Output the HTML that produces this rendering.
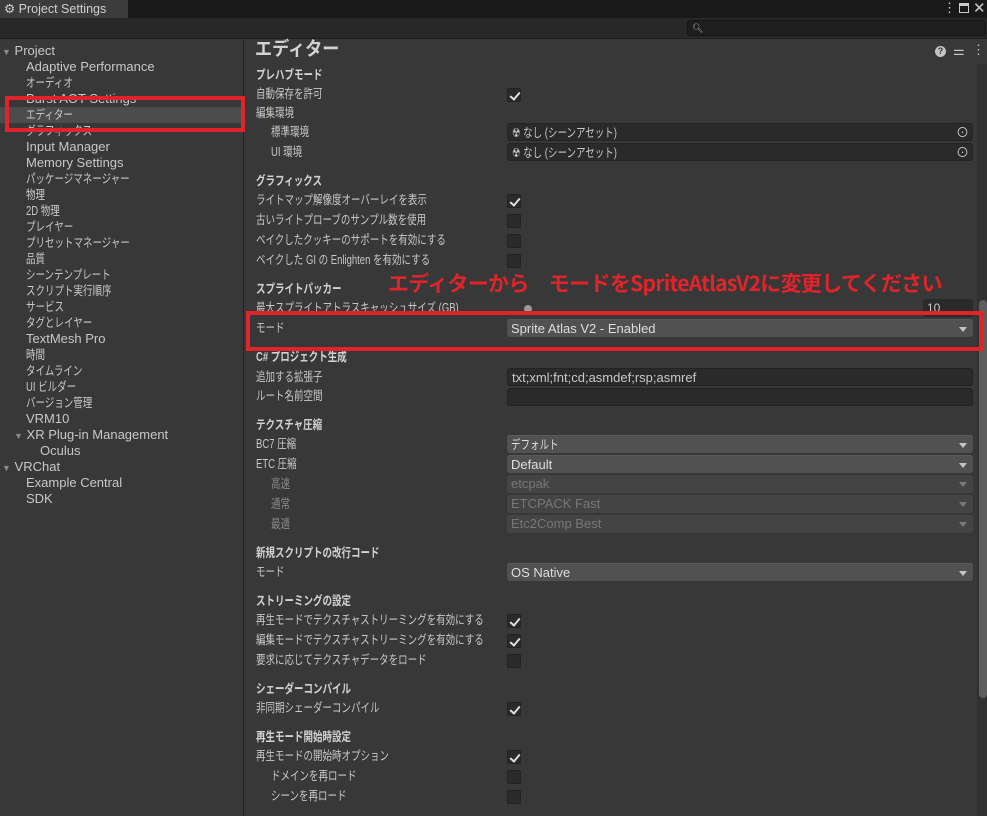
<!DOCTYPE html>
<html><head><meta charset="utf-8"><style>
*{margin:0;padding:0;box-sizing:border-box}
body{width:987px;height:816px;background:#383838;overflow:hidden;position:relative;font-family:"Liberation Sans","Noto Sans CJK JP",sans-serif;font-size:12px;color:#c8c8c8}
.a{position:absolute;white-space:nowrap}
.l{position:absolute;left:26px;line-height:16px;white-space:nowrap;font-size:12.5px;transform:scaleX(.76);transform-origin:left}
.r{position:absolute;left:256px;line-height:20px;white-space:nowrap;font-size:12.5px;transform:scaleX(.76);transform-origin:left}
.e{font-size:13px;transform:none}
.h{font-weight:bold;color:#d2d2d2}
.j{display:inline-block;font-size:12.5px;transform:scaleX(.76);transform-origin:left}
.f{position:absolute;left:507px;width:466px;height:18px;border-radius:3px;line-height:18px;padding-left:4px;white-space:nowrap;font-size:13px}
.fd{background:#2a2a2a;border:1px solid #232323}
.dd{background:#515151;border-top:1px solid #5a5a5a;color:#dedede}
.dis{background:#444;color:#777;border:none}
.dd::after,.dis::after{content:"";position:absolute;right:6px;top:7px;border:4px solid transparent;border-top:5px solid #c4c4c4;border-bottom:0}
.dis::after{border-top-color:#777}
.cb{position:absolute;left:507px;width:14px;height:14px;background:#2a2a2a;border:1px solid #222;border-radius:2px}
.ck::after{content:"";position:absolute;left:4px;top:1px;width:4px;height:8px;border-right:2px solid #e0e0e0;border-bottom:2px solid #e0e0e0;transform:rotate(40deg)}
.red{position:absolute;border:4px solid #e0242a}
</style></head><body>
<div class="a" style="left:0;top:0;width:987px;height:18px;background:#191919"></div>
<div class="a" style="left:0;top:0;width:128px;height:18px;background:#3c3c3c;line-height:18px;padding-left:4px;font-size:12.5px;color:#d0d0d0">⚙ Project Settings</div>
<div class="a" style="left:943px;top:0;color:#ccc;line-height:16px;font-size:13px">⋮</div>
<div class="a" style="left:959px;top:3px;width:10px;height:10px;border:1.5px solid #ccc;border-top-width:3px"></div>
<div class="a" style="left:973px;top:-1px;color:#ccc;font-size:15px">✕</div>
<div class="a" style="left:0;top:18px;width:987px;height:21px;background:#282828;border-bottom:1px solid #1e1e1e"></div>
<div class="a" style="left:687px;top:20px;width:299px;height:16px;background:#1e1e1e;border:1px solid #151515;border-radius:3px;font-size:9px;color:#aaa;padding-left:4px;line-height:14px">🔍︎</div>
<div class="a" style="left:0;top:40px;width:244px;height:776px;background:#383838;border-right:1px solid #222"></div>
<div class="a" style="left:0;top:107px;width:244px;height:16px;background:#4c4c4c"></div>
<div class="l e" style="left:2px;top:43px"><span style="font-size:9px;color:#888">▼</span> Project</div>
<div class="l e" style="top:59px">Adaptive Performance</div>
<div class="l" style="top:75px">オーディオ</div>
<div class="l e" style="top:91px">Burst AOT Settings</div>
<div class="l" style="top:107px">エディター</div>
<div class="l" style="top:123px">グラフィックス</div>
<div class="l e" style="top:139px">Input Manager</div>
<div class="l e" style="top:155px">Memory Settings</div>
<div class="l" style="top:171px">パッケージマネージャー</div>
<div class="l" style="top:187px">物理</div>
<div class="l" style="top:203px">2D 物理</div>
<div class="l" style="top:219px">プレイヤー</div>
<div class="l" style="top:235px">プリセットマネージャー</div>
<div class="l" style="top:251px">品質</div>
<div class="l" style="top:267px">シーンテンプレート</div>
<div class="l" style="top:283px">スクリプト実行順序</div>
<div class="l" style="top:299px">サービス</div>
<div class="l" style="top:315px">タグとレイヤー</div>
<div class="l e" style="top:331px">TextMesh Pro</div>
<div class="l" style="top:347px">時間</div>
<div class="l" style="top:363px">タイムライン</div>
<div class="l" style="top:379px">UI ビルダー</div>
<div class="l" style="top:395px">バージョン管理</div>
<div class="l e" style="top:411px">VRM10</div>
<div class="l e" style="left:14px;top:427px"><span style="font-size:9px;color:#888">▼</span> XR Plug-in Management</div>
<div class="l e" style="left:40px;top:443px">Oculus</div>
<div class="l e" style="left:2px;top:459px"><span style="font-size:9px;color:#888">▼</span> VRChat</div>
<div class="l e" style="top:475px">Example Central</div>
<div class="l e" style="top:491px">SDK</div>

<div class="a h" style="left:255px;top:38px;font-size:19px;line-height:24px;transform:scaleX(.9);transform-origin:left">エディター</div>
<div class="a" style="left:935px;top:46px;width:11px;height:11px;border-radius:50%;background:#c4c4c4;color:#383838;font-size:9px;font-weight:bold;text-align:center;line-height:11px">?</div>
<div class="a" style="left:953px;top:43px;font-size:13px;color:#c4c4c4">⚌</div>
<div class="a" style="left:972px;top:42px;font-size:13px;color:#c4c4c4">⋮</div>

<div class="r h" style="top:65px">プレハブモード</div>
<div class="r" style="top:84px">自動保存を許可</div><div class="cb ck" style="top:88px"></div>
<div class="r" style="top:103px">編集環境</div>
<div class="r" style="left:271px;top:122px">標準環境</div><div class="f fd" style="top:123px"><span class="j">☢ なし (シーンアセット)</span><span style="position:absolute;right:3px;top:0">⊙</span></div>
<div class="r" style="left:271px;top:142px">UI 環境</div><div class="f fd" style="top:143px"><span class="j">☢ なし (シーンアセット)</span><span style="position:absolute;right:3px;top:0">⊙</span></div>

<div class="r h" style="top:171px">グラフィックス</div>
<div class="r" style="top:190px">ライトマップ解像度オーバーレイを表示</div><div class="cb ck" style="top:194px"></div>
<div class="r" style="top:210px">古いライトプローブのサンプル数を使用</div><div class="cb" style="top:214px"></div>
<div class="r" style="top:230px">ベイクしたクッキーのサポートを有効にする</div><div class="cb" style="top:234px"></div>
<div class="r" style="top:250px">ベイクした GI の Enlighten を有効にする</div><div class="cb" style="top:254px"></div>

<div class="r h" style="top:279px">スプライトパッカー</div>
<div class="r" style="top:298px">最大スプライトアトラスキャッシュサイズ (GB)</div>
<div class="a" style="left:524px;top:305px;width:8px;height:8px;border-radius:50%;background:#999"></div>
<div class="a" style="left:923px;top:299px;width:50px;height:18px;background:#2a2a2a;border-radius:3px;padding-left:4px;line-height:18px">10</div>
<div class="r" style="top:318px">モード</div><div class="f dd" style="top:319px">Sprite Atlas V2 - Enabled</div>

<div class="r h" style="top:347px">C# プロジェクト生成</div>
<div class="r" style="top:367px">追加する拡張子</div><div class="f fd" style="top:368px">txt;xml;fnt;cd;asmdef;rsp;asmref</div>
<div class="r" style="top:386px">ルート名前空間</div><div class="f fd" style="top:388px"></div>

<div class="r h" style="top:415px">テクスチャ圧縮</div>
<div class="r" style="top:434px">BC7 圧縮</div><div class="f dd" style="top:435px"><span class="j">デフォルト</span></div>
<div class="r" style="top:454px">ETC 圧縮</div><div class="f dd" style="top:455px">Default</div>
<div class="r" style="left:271px;top:474px;color:#888">高速</div><div class="f dis" style="top:475px">etcpak</div>
<div class="r" style="left:271px;top:494px;color:#888">通常</div><div class="f dis" style="top:495px">ETCPACK Fast</div>
<div class="r" style="left:271px;top:514px;color:#888">最適</div><div class="f dis" style="top:515px">Etc2Comp Best</div>

<div class="r h" style="top:543px">新規スクリプトの改行コード</div>
<div class="r" style="top:562px">モード</div><div class="f dd" style="top:563px">OS Native</div>

<div class="r h" style="top:591px">ストリーミングの設定</div>
<div class="r" style="top:610px">再生モードでテクスチャストリーミングを有効にする</div><div class="cb ck" style="top:614px"></div>
<div class="r" style="top:630px">編集モードでテクスチャストリーミングを有効にする</div><div class="cb ck" style="top:634px"></div>
<div class="r" style="top:650px">要求に応じてテクスチャデータをロード</div><div class="cb" style="top:654px"></div>

<div class="r h" style="top:679px">シェーダーコンパイル</div>
<div class="r" style="top:698px">非同期シェーダーコンパイル</div><div class="cb ck" style="top:702px"></div>

<div class="r h" style="top:727px">再生モード開始時設定</div>
<div class="r" style="top:746px">再生モードの開始時オプション</div><div class="cb ck" style="top:750px"></div>
<div class="r" style="left:271px;top:766px">ドメインを再ロード</div><div class="cb" style="top:770px"></div>
<div class="r" style="left:271px;top:786px">シーンを再ロード</div><div class="cb" style="top:790px"></div>

<div class="a" style="left:977px;top:64px;width:10px;height:752px;background:#323232"></div>
<div class="a" style="left:979px;top:300px;width:8px;height:398px;background:#5e5e5e;border-radius:4px"></div>

<div class="a" style="left:388px;top:268px;font-size:21px;color:#e0242a;line-height:30px;font-family:'Noto Sans CJK JP',sans-serif;font-weight:700;letter-spacing:-0.7px">エディターから　モードをSpriteAtlasV2に変更してください</div>
<div class="red" style="left:5px;top:96px;width:240px;height:36px"></div>
<div class="red" style="left:246px;top:311px;width:738px;height:40px"></div>
</body></html>
